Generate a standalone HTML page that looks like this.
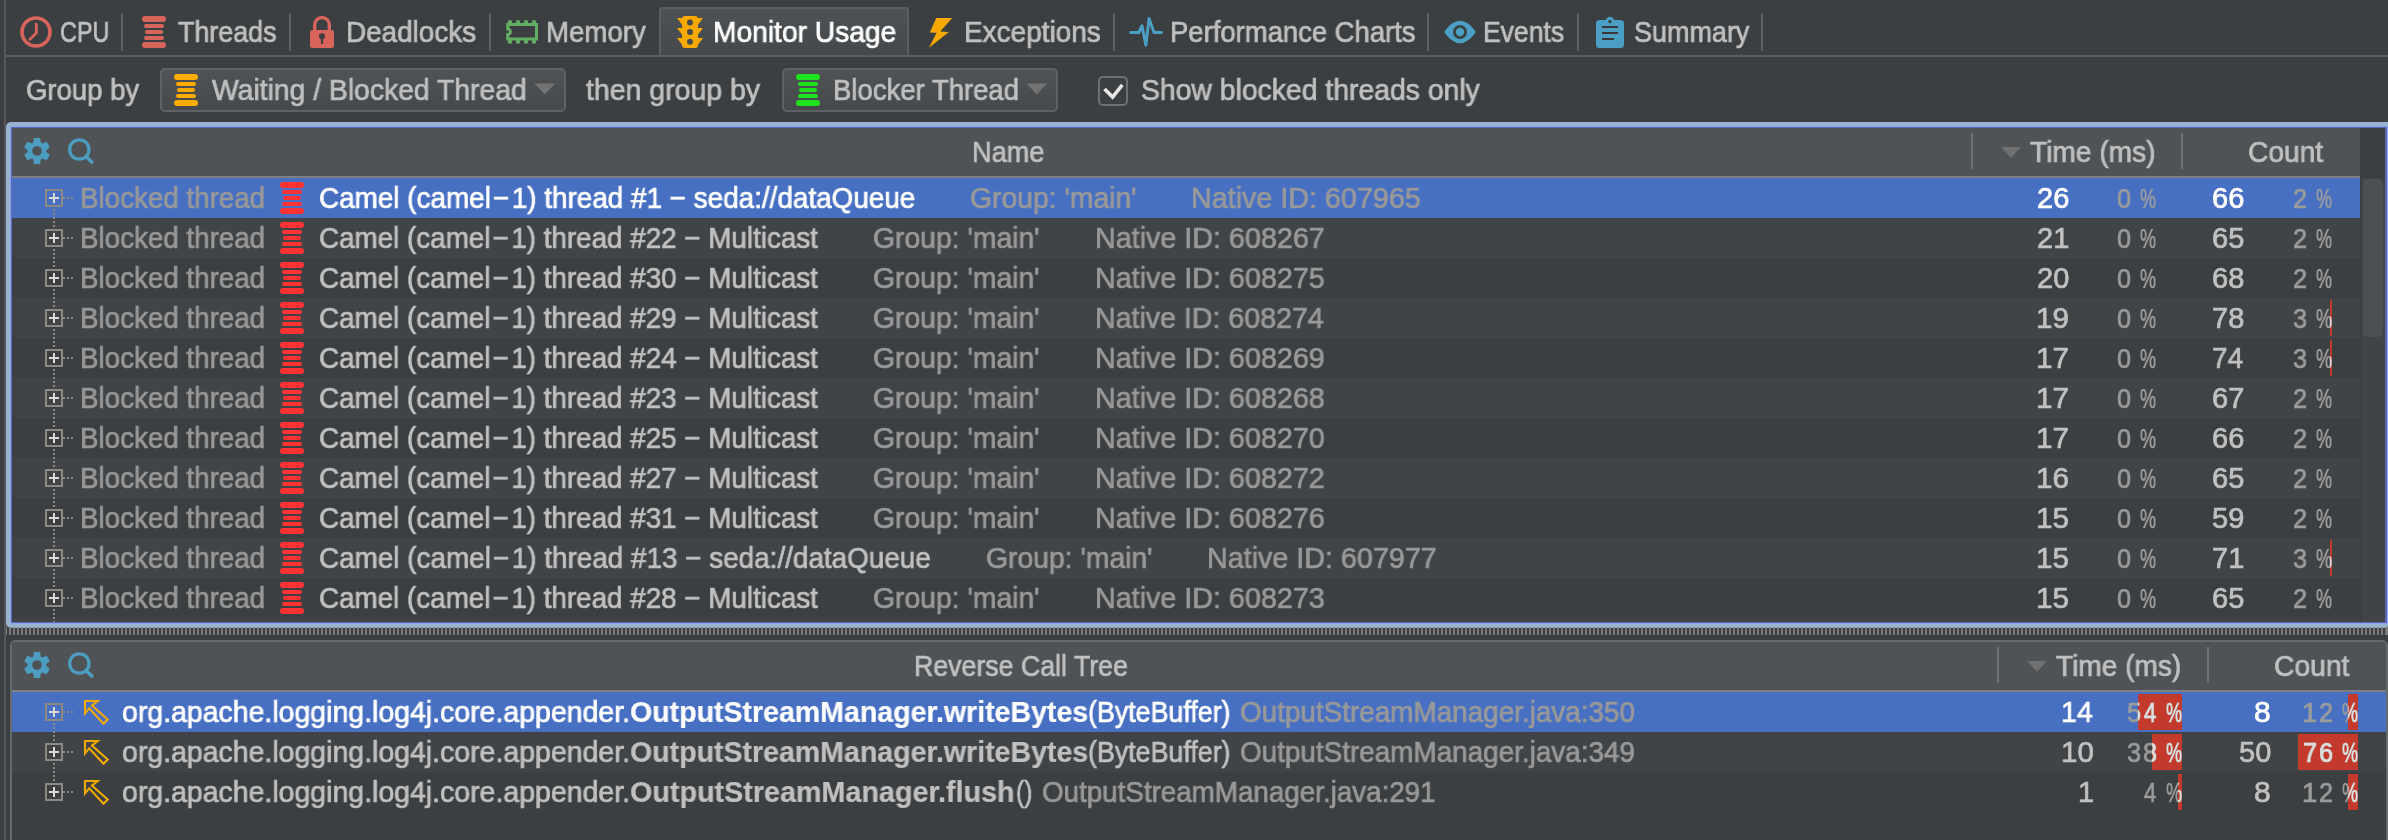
<!DOCTYPE html>
<html><head><meta charset="utf-8">
<style>
html,body{margin:0;padding:0}
body{width:2388px;height:840px;overflow:hidden;position:relative;background:#3c3f41;font-family:"Liberation Sans",sans-serif}
.t{position:absolute;white-space:pre;line-height:40px;font-family:"Liberation Sans",sans-serif;transform-origin:0 0;will-change:transform}
.r{position:absolute}
</style></head><body>
<div class="r" style="left:4px;top:0px;width:2px;height:840px;background:#555759;"></div>
<div class="r" style="left:659px;top:7px;width:246px;height:48px;border:2px solid #5b5e60;border-bottom:none;border-radius:3px 3px 0 0;background:linear-gradient(#4e5255,#44484b)"></div>
<div class="r" style="left:6px;top:55px;width:2382px;height:2px;background:#5b5d5f;"></div>
<div class="r" style="left:121px;top:13px;width:2px;height:38px;background:#5f6163;"></div>
<div class="r" style="left:289px;top:13px;width:2px;height:38px;background:#5f6163;"></div>
<div class="r" style="left:489px;top:13px;width:2px;height:38px;background:#5f6163;"></div>
<div class="r" style="left:1113px;top:13px;width:2px;height:38px;background:#5f6163;"></div>
<div class="r" style="left:1427px;top:13px;width:2px;height:38px;background:#5f6163;"></div>
<div class="r" style="left:1577px;top:13px;width:2px;height:38px;background:#5f6163;"></div>
<div class="r" style="left:1761px;top:13px;width:2px;height:38px;background:#5f6163;"></div>
<svg class="r" style="left:20px;top:16px" width="32" height="32" viewBox="0 0 32 32"><circle cx="16" cy="16" r="14" fill="none" stroke="#d8645c" stroke-width="3.6"/><path d="M16.3 8.2 V17 L10 23.2" fill="none" stroke="#d8645c" stroke-width="2.8" stroke-linecap="round" stroke-linejoin="round"/></svg>
<svg class="r" style="left:142px;top:16px" width="24" height="32" viewBox="0 0 24 32"><rect x="0" y="0" width="24" height="6" rx="3" fill="#d8645c"/><rect x="2" y="8" width="20" height="4" rx="2" fill="#d8645c"/><rect x="3" y="14" width="18" height="4" rx="2" fill="#d8645c"/><rect x="2" y="20" width="20" height="4" rx="2" fill="#d8645c"/><rect x="0" y="26" width="24" height="6" rx="3" fill="#d8645c"/></svg>
<svg class="r" style="left:310px;top:15px" width="24" height="34" viewBox="0 0 24 34"><path d="M4.7 15.5 V9.8 A7.3 7.3 0 0 1 19.3 9.8 V15.5" fill="none" stroke="#d8645c" stroke-width="3.4"/><rect x="0" y="15" width="24" height="18" rx="2.5" fill="#d8645c"/><circle cx="12" cy="21.3" r="3" fill="#3c3f41"/><rect x="10.9" y="21" width="2.2" height="8" fill="#3c3f41"/></svg>
<svg class="r" style="left:504px;top:18px" width="36" height="28" viewBox="0 0 36 28"><path d="M3.7 6.6 H32.5 V20.9 H3.7 V16.5 A2.7 2.7 0 0 0 3.7 11 Z" fill="none" stroke="#62ae62" stroke-width="3"/><rect x="4" y="2" width="4" height="4" rx="1.6" fill="#62ae62"/><rect x="4" y="21.5" width="4" height="4.3" rx="1.6" fill="#62ae62"/><rect x="12" y="2" width="4" height="4" rx="1.6" fill="#62ae62"/><rect x="12" y="21.5" width="4" height="4.3" rx="1.6" fill="#62ae62"/><rect x="20" y="2" width="4" height="4" rx="1.6" fill="#62ae62"/><rect x="20" y="21.5" width="4" height="4.3" rx="1.6" fill="#62ae62"/><rect x="28" y="2" width="4" height="4" rx="1.6" fill="#62ae62"/><rect x="28" y="21.5" width="4" height="4.3" rx="1.6" fill="#62ae62"/></svg>
<svg class="r" style="left:676px;top:15px" width="30" height="34" viewBox="0 0 30 34"><rect x="6" y="1" width="16" height="32" rx="3" fill="#f8a900"/><path d="M1 3 H7 V11 Z M27 3 H21 V11 Z M1 13 H7 V21 Z M27 13 H21 V21 Z M1 23 H7 V31 Z M27 23 H21 V31 Z" fill="#f8a900"/><circle cx="14" cy="7.5" r="3" fill="#474b4e"/><circle cx="14" cy="17" r="3" fill="#474b4e"/><circle cx="14" cy="26.7" r="3" fill="#474b4e"/></svg>
<svg class="r" style="left:924px;top:10px" width="36" height="44" viewBox="924 10 36 44"><path d="M936.3 17.9 L952.3 17.9 L940.2 31.5 L948.9 32 L929 47.7 L936.6 32.8 L929.8 32.5 Z" fill="#f8a900"/></svg>
<svg class="r" style="left:1126px;top:10px" width="44" height="44" viewBox="1126 10 44 44"><path d="M1130.7 32.5 H1138.8 L1142 25.7 L1145.9 45.2 L1149 18.6 L1154 32.5 H1161.4" fill="none" stroke="#4c9fc4" stroke-width="3" stroke-linejoin="round" stroke-linecap="round"/></svg>
<svg class="r" style="left:1438px;top:10px" width="44" height="44" viewBox="1438 10 44 44"><path d="M1444 32 Q1460 9.5 1476 32 Q1460 54.5 1444 32 Z" fill="#4c9fc4"/><circle cx="1460" cy="32" r="5.6" fill="none" stroke="#3c3f41" stroke-width="2.8"/></svg>
<svg class="r" style="left:1590px;top:10px" width="40" height="44" viewBox="1590 10 40 44"><rect x="1596" y="20" width="28" height="28" rx="3.5" fill="#4c9fc4"/><circle cx="1610" cy="21" r="4.3" fill="#4c9fc4"/><circle cx="1610" cy="21.5" r="1.6" fill="#3a3536"/><rect x="1602" y="26" width="16" height="2" fill="#3a3536"/><rect x="1602" y="32" width="16" height="2" fill="#3a3536"/><rect x="1602" y="38" width="12" height="2" fill="#3a3536"/></svg>
<div class="r" style="left:160px;top:68px;width:402px;height:40px;border:2px solid #5f6264;border-radius:5px;background:linear-gradient(#4f5356,#45494c)"></div>
<svg class="r" style="left:174px;top:74px" width="24" height="32" viewBox="0 0 24 32"><rect x="0" y="0" width="24" height="6" rx="3" fill="#ffab00"/><rect x="2" y="8" width="20" height="4" rx="2" fill="#ffab00"/><rect x="3" y="14" width="18" height="4" rx="2" fill="#ffab00"/><rect x="2" y="20" width="20" height="4" rx="2" fill="#ffab00"/><rect x="0" y="26" width="24" height="6" rx="3" fill="#ffab00"/></svg>
<svg class="r" style="left:534px;top:83px" width="22" height="12" viewBox="0 0 22 12"><path d="M0.5 0.5 H21 L10.75 11.5 Z" fill="#737373"/></svg>
<div class="r" style="left:782px;top:68px;width:272px;height:40px;border:2px solid #5f6264;border-radius:5px;background:linear-gradient(#4f5356,#45494c)"></div>
<svg class="r" style="left:796px;top:74px" width="24" height="32" viewBox="0 0 24 32"><rect x="0" y="0" width="24" height="6" rx="3" fill="#1ee21e"/><rect x="2" y="8" width="20" height="4" rx="2" fill="#1ee21e"/><rect x="3" y="14" width="18" height="4" rx="2" fill="#1ee21e"/><rect x="2" y="20" width="20" height="4" rx="2" fill="#1ee21e"/><rect x="0" y="26" width="24" height="6" rx="3" fill="#1ee21e"/></svg>
<svg class="r" style="left:1026px;top:83px" width="22" height="12" viewBox="0 0 22 12"><path d="M0.5 0.5 H21 L10.75 11.5 Z" fill="#737373"/></svg>
<div class="r" style="left:1098px;top:76px;width:26px;height:26px;border:2px solid #6e7072;border-radius:5px;background:#3c3f41"></div>
<svg class="r" style="left:1098px;top:76px" width="30" height="30" viewBox="1098 76 30 30"><path d="M1104.5 89 L1112.6 97 L1122.3 84.8" fill="none" stroke="#e6e6e6" stroke-width="3.6"/></svg>
<div class="r" style="left:6px;top:122px;width:2382px;height:506px;background:#9ab3cf;border-radius:5px 0 0 5px"></div>
<div class="r" style="left:10px;top:126px;width:2378px;height:498px;background:#8aa6ee;border-radius:2px 0 0 2px"></div>
<div class="r" style="left:11px;top:127px;width:2376px;height:496px;background:#5d69b6;border-radius:1px 0 0 1px"></div>
<div class="r" style="left:12px;top:128px;width:2373px;height:494px;background:#3c3f41;"></div>
<div class="r" style="left:12px;top:128px;width:2348px;height:48px;background:#4f5356;"></div>
<div class="r" style="left:12px;top:176px;width:2348px;height:2px;background:#7e7f80;"></div>
<div class="r" style="left:2360px;top:128px;width:25px;height:50px;background:#3c3f41;"></div>
<div class="r" style="left:2360px;top:178px;width:25px;height:444px;background:#414447;"></div>
<div class="r" style="left:2360px;top:178px;width:1px;height:444px;background:#3b3e40;"></div>
<div class="r" style="left:2363px;top:179px;width:20px;height:158px;background:#4d5052;border-radius:5px"></div>
<svg class="r" style="left:23px;top:137px" width="28" height="28" viewBox="-14 -14 28 28"><g fill="#4c9dbf"><circle r="9.3"/><path d="M-3.9 -8 L-3.1 -13 L3.1 -13 L3.9 -8 Z" transform="rotate(0)"/><path d="M-3.9 -8 L-3.1 -13 L3.1 -13 L3.9 -8 Z" transform="rotate(60)"/><path d="M-3.9 -8 L-3.1 -13 L3.1 -13 L3.9 -8 Z" transform="rotate(120)"/><path d="M-3.9 -8 L-3.1 -13 L3.1 -13 L3.9 -8 Z" transform="rotate(180)"/><path d="M-3.9 -8 L-3.1 -13 L3.1 -13 L3.9 -8 Z" transform="rotate(240)"/><path d="M-3.9 -8 L-3.1 -13 L3.1 -13 L3.9 -8 Z" transform="rotate(300)"/></g><circle r="4.8" fill="#4f5356"/></svg>
<svg class="r" style="left:68px;top:138px" width="28" height="28" viewBox="0 0 28 28"><circle cx="11.3" cy="11.5" r="9.7" fill="none" stroke="#4c9dbf" stroke-width="3.3"/><line x1="18.5" y1="19" x2="23.9" y2="24.1" stroke="#4c9dbf" stroke-width="3.6" stroke-linecap="round"/></svg>
<div class="r" style="left:1971px;top:133px;width:2px;height:36px;background:#6f7173;"></div>
<div class="r" style="left:2181px;top:133px;width:2px;height:36px;background:#6f7173;"></div>
<svg class="r" style="left:2001px;top:147px" width="20" height="11" viewBox="0 0 20 11"><path d="M0 0 H20 L10 11 Z" fill="#707070"/></svg>
<div class="r" style="left:12px;top:178px;width:2348px;height:40px;background:#4870c2;"></div>
<div class="r" style="left:12px;top:218px;width:2348px;height:40px;background:#414447;"></div>
<div class="r" style="left:12px;top:258px;width:2348px;height:40px;background:#3c3f41;"></div>
<div class="r" style="left:12px;top:298px;width:2348px;height:40px;background:#414447;"></div>
<div class="r" style="left:12px;top:338px;width:2348px;height:40px;background:#3c3f41;"></div>
<div class="r" style="left:12px;top:378px;width:2348px;height:40px;background:#414447;"></div>
<div class="r" style="left:12px;top:418px;width:2348px;height:40px;background:#3c3f41;"></div>
<div class="r" style="left:12px;top:458px;width:2348px;height:40px;background:#414447;"></div>
<div class="r" style="left:12px;top:498px;width:2348px;height:40px;background:#3c3f41;"></div>
<div class="r" style="left:12px;top:538px;width:2348px;height:40px;background:#414447;"></div>
<div class="r" style="left:12px;top:578px;width:2348px;height:40px;background:#3c3f41;"></div>
<div class="r" style="left:12px;top:618px;width:2348px;height:4px;background:#414447;"></div>
<div class="r" style="left:53px;top:209px;width:2px;height:413px;background:repeating-linear-gradient(to bottom,#8c8882 0 2px,transparent 2px 4px)"></div>
<svg class="r" style="left:45px;top:189px" width="30" height="18" viewBox="0 0 30 18"><rect x="1" y="1" width="16" height="16" fill="none" stroke="#8c8882" stroke-width="2"/><rect x="4" y="8" width="10" height="2" fill="#dcdad6"/><rect x="8" y="4" width="2" height="10" fill="#dcdad6"/><rect x="18" y="8" width="2" height="2" fill="#8c8882"/><rect x="22" y="8" width="2" height="2" fill="#8c8882"/><rect x="26" y="8" width="2" height="2" fill="#8c8882"/></svg>
<svg class="r" style="left:280px;top:182px" width="24" height="32" viewBox="0 0 24 32"><rect x="0" y="0" width="24" height="6" rx="3" fill="#ff3333"/><rect x="2" y="8" width="20" height="4" rx="2" fill="#ff3333"/><rect x="3" y="14" width="18" height="4" rx="2" fill="#ff3333"/><rect x="2" y="20" width="20" height="4" rx="2" fill="#ff3333"/><rect x="0" y="26" width="24" height="6" rx="3" fill="#ff3333"/></svg>
<svg class="r" style="left:45px;top:229px" width="30" height="18" viewBox="0 0 30 18"><rect x="1" y="1" width="16" height="16" fill="none" stroke="#8c8882" stroke-width="2"/><rect x="4" y="8" width="10" height="2" fill="#dcdad6"/><rect x="8" y="4" width="2" height="10" fill="#dcdad6"/><rect x="18" y="8" width="2" height="2" fill="#8c8882"/><rect x="22" y="8" width="2" height="2" fill="#8c8882"/><rect x="26" y="8" width="2" height="2" fill="#8c8882"/></svg>
<svg class="r" style="left:280px;top:222px" width="24" height="32" viewBox="0 0 24 32"><rect x="0" y="0" width="24" height="6" rx="3" fill="#ff3333"/><rect x="2" y="8" width="20" height="4" rx="2" fill="#ff3333"/><rect x="3" y="14" width="18" height="4" rx="2" fill="#ff3333"/><rect x="2" y="20" width="20" height="4" rx="2" fill="#ff3333"/><rect x="0" y="26" width="24" height="6" rx="3" fill="#ff3333"/></svg>
<svg class="r" style="left:45px;top:269px" width="30" height="18" viewBox="0 0 30 18"><rect x="1" y="1" width="16" height="16" fill="none" stroke="#8c8882" stroke-width="2"/><rect x="4" y="8" width="10" height="2" fill="#dcdad6"/><rect x="8" y="4" width="2" height="10" fill="#dcdad6"/><rect x="18" y="8" width="2" height="2" fill="#8c8882"/><rect x="22" y="8" width="2" height="2" fill="#8c8882"/><rect x="26" y="8" width="2" height="2" fill="#8c8882"/></svg>
<svg class="r" style="left:280px;top:262px" width="24" height="32" viewBox="0 0 24 32"><rect x="0" y="0" width="24" height="6" rx="3" fill="#ff3333"/><rect x="2" y="8" width="20" height="4" rx="2" fill="#ff3333"/><rect x="3" y="14" width="18" height="4" rx="2" fill="#ff3333"/><rect x="2" y="20" width="20" height="4" rx="2" fill="#ff3333"/><rect x="0" y="26" width="24" height="6" rx="3" fill="#ff3333"/></svg>
<svg class="r" style="left:45px;top:309px" width="30" height="18" viewBox="0 0 30 18"><rect x="1" y="1" width="16" height="16" fill="none" stroke="#8c8882" stroke-width="2"/><rect x="4" y="8" width="10" height="2" fill="#dcdad6"/><rect x="8" y="4" width="2" height="10" fill="#dcdad6"/><rect x="18" y="8" width="2" height="2" fill="#8c8882"/><rect x="22" y="8" width="2" height="2" fill="#8c8882"/><rect x="26" y="8" width="2" height="2" fill="#8c8882"/></svg>
<svg class="r" style="left:280px;top:302px" width="24" height="32" viewBox="0 0 24 32"><rect x="0" y="0" width="24" height="6" rx="3" fill="#ff3333"/><rect x="2" y="8" width="20" height="4" rx="2" fill="#ff3333"/><rect x="3" y="14" width="18" height="4" rx="2" fill="#ff3333"/><rect x="2" y="20" width="20" height="4" rx="2" fill="#ff3333"/><rect x="0" y="26" width="24" height="6" rx="3" fill="#ff3333"/></svg>
<div class="r" style="left:2330.2px;top:300px;width:2px;height:36px;background:#c3392b;"></div>
<svg class="r" style="left:45px;top:349px" width="30" height="18" viewBox="0 0 30 18"><rect x="1" y="1" width="16" height="16" fill="none" stroke="#8c8882" stroke-width="2"/><rect x="4" y="8" width="10" height="2" fill="#dcdad6"/><rect x="8" y="4" width="2" height="10" fill="#dcdad6"/><rect x="18" y="8" width="2" height="2" fill="#8c8882"/><rect x="22" y="8" width="2" height="2" fill="#8c8882"/><rect x="26" y="8" width="2" height="2" fill="#8c8882"/></svg>
<svg class="r" style="left:280px;top:342px" width="24" height="32" viewBox="0 0 24 32"><rect x="0" y="0" width="24" height="6" rx="3" fill="#ff3333"/><rect x="2" y="8" width="20" height="4" rx="2" fill="#ff3333"/><rect x="3" y="14" width="18" height="4" rx="2" fill="#ff3333"/><rect x="2" y="20" width="20" height="4" rx="2" fill="#ff3333"/><rect x="0" y="26" width="24" height="6" rx="3" fill="#ff3333"/></svg>
<div class="r" style="left:2330.2px;top:340px;width:2px;height:36px;background:#c3392b;"></div>
<svg class="r" style="left:45px;top:389px" width="30" height="18" viewBox="0 0 30 18"><rect x="1" y="1" width="16" height="16" fill="none" stroke="#8c8882" stroke-width="2"/><rect x="4" y="8" width="10" height="2" fill="#dcdad6"/><rect x="8" y="4" width="2" height="10" fill="#dcdad6"/><rect x="18" y="8" width="2" height="2" fill="#8c8882"/><rect x="22" y="8" width="2" height="2" fill="#8c8882"/><rect x="26" y="8" width="2" height="2" fill="#8c8882"/></svg>
<svg class="r" style="left:280px;top:382px" width="24" height="32" viewBox="0 0 24 32"><rect x="0" y="0" width="24" height="6" rx="3" fill="#ff3333"/><rect x="2" y="8" width="20" height="4" rx="2" fill="#ff3333"/><rect x="3" y="14" width="18" height="4" rx="2" fill="#ff3333"/><rect x="2" y="20" width="20" height="4" rx="2" fill="#ff3333"/><rect x="0" y="26" width="24" height="6" rx="3" fill="#ff3333"/></svg>
<svg class="r" style="left:45px;top:429px" width="30" height="18" viewBox="0 0 30 18"><rect x="1" y="1" width="16" height="16" fill="none" stroke="#8c8882" stroke-width="2"/><rect x="4" y="8" width="10" height="2" fill="#dcdad6"/><rect x="8" y="4" width="2" height="10" fill="#dcdad6"/><rect x="18" y="8" width="2" height="2" fill="#8c8882"/><rect x="22" y="8" width="2" height="2" fill="#8c8882"/><rect x="26" y="8" width="2" height="2" fill="#8c8882"/></svg>
<svg class="r" style="left:280px;top:422px" width="24" height="32" viewBox="0 0 24 32"><rect x="0" y="0" width="24" height="6" rx="3" fill="#ff3333"/><rect x="2" y="8" width="20" height="4" rx="2" fill="#ff3333"/><rect x="3" y="14" width="18" height="4" rx="2" fill="#ff3333"/><rect x="2" y="20" width="20" height="4" rx="2" fill="#ff3333"/><rect x="0" y="26" width="24" height="6" rx="3" fill="#ff3333"/></svg>
<svg class="r" style="left:45px;top:469px" width="30" height="18" viewBox="0 0 30 18"><rect x="1" y="1" width="16" height="16" fill="none" stroke="#8c8882" stroke-width="2"/><rect x="4" y="8" width="10" height="2" fill="#dcdad6"/><rect x="8" y="4" width="2" height="10" fill="#dcdad6"/><rect x="18" y="8" width="2" height="2" fill="#8c8882"/><rect x="22" y="8" width="2" height="2" fill="#8c8882"/><rect x="26" y="8" width="2" height="2" fill="#8c8882"/></svg>
<svg class="r" style="left:280px;top:462px" width="24" height="32" viewBox="0 0 24 32"><rect x="0" y="0" width="24" height="6" rx="3" fill="#ff3333"/><rect x="2" y="8" width="20" height="4" rx="2" fill="#ff3333"/><rect x="3" y="14" width="18" height="4" rx="2" fill="#ff3333"/><rect x="2" y="20" width="20" height="4" rx="2" fill="#ff3333"/><rect x="0" y="26" width="24" height="6" rx="3" fill="#ff3333"/></svg>
<svg class="r" style="left:45px;top:509px" width="30" height="18" viewBox="0 0 30 18"><rect x="1" y="1" width="16" height="16" fill="none" stroke="#8c8882" stroke-width="2"/><rect x="4" y="8" width="10" height="2" fill="#dcdad6"/><rect x="8" y="4" width="2" height="10" fill="#dcdad6"/><rect x="18" y="8" width="2" height="2" fill="#8c8882"/><rect x="22" y="8" width="2" height="2" fill="#8c8882"/><rect x="26" y="8" width="2" height="2" fill="#8c8882"/></svg>
<svg class="r" style="left:280px;top:502px" width="24" height="32" viewBox="0 0 24 32"><rect x="0" y="0" width="24" height="6" rx="3" fill="#ff3333"/><rect x="2" y="8" width="20" height="4" rx="2" fill="#ff3333"/><rect x="3" y="14" width="18" height="4" rx="2" fill="#ff3333"/><rect x="2" y="20" width="20" height="4" rx="2" fill="#ff3333"/><rect x="0" y="26" width="24" height="6" rx="3" fill="#ff3333"/></svg>
<svg class="r" style="left:45px;top:549px" width="30" height="18" viewBox="0 0 30 18"><rect x="1" y="1" width="16" height="16" fill="none" stroke="#8c8882" stroke-width="2"/><rect x="4" y="8" width="10" height="2" fill="#dcdad6"/><rect x="8" y="4" width="2" height="10" fill="#dcdad6"/><rect x="18" y="8" width="2" height="2" fill="#8c8882"/><rect x="22" y="8" width="2" height="2" fill="#8c8882"/><rect x="26" y="8" width="2" height="2" fill="#8c8882"/></svg>
<svg class="r" style="left:280px;top:542px" width="24" height="32" viewBox="0 0 24 32"><rect x="0" y="0" width="24" height="6" rx="3" fill="#ff3333"/><rect x="2" y="8" width="20" height="4" rx="2" fill="#ff3333"/><rect x="3" y="14" width="18" height="4" rx="2" fill="#ff3333"/><rect x="2" y="20" width="20" height="4" rx="2" fill="#ff3333"/><rect x="0" y="26" width="24" height="6" rx="3" fill="#ff3333"/></svg>
<div class="r" style="left:2330.2px;top:540px;width:2px;height:36px;background:#c3392b;"></div>
<svg class="r" style="left:45px;top:589px" width="30" height="18" viewBox="0 0 30 18"><rect x="1" y="1" width="16" height="16" fill="none" stroke="#8c8882" stroke-width="2"/><rect x="4" y="8" width="10" height="2" fill="#dcdad6"/><rect x="8" y="4" width="2" height="10" fill="#dcdad6"/><rect x="18" y="8" width="2" height="2" fill="#8c8882"/><rect x="22" y="8" width="2" height="2" fill="#8c8882"/><rect x="26" y="8" width="2" height="2" fill="#8c8882"/></svg>
<svg class="r" style="left:280px;top:582px" width="24" height="32" viewBox="0 0 24 32"><rect x="0" y="0" width="24" height="6" rx="3" fill="#ff3333"/><rect x="2" y="8" width="20" height="4" rx="2" fill="#ff3333"/><rect x="3" y="14" width="18" height="4" rx="2" fill="#ff3333"/><rect x="2" y="20" width="20" height="4" rx="2" fill="#ff3333"/><rect x="0" y="26" width="24" height="6" rx="3" fill="#ff3333"/></svg>
<div class="r" style="left:6px;top:627px;width:2382px;height:8px;background:repeating-linear-gradient(to right,#7a7a7a 0 2px,transparent 2px 4px);background-position:-1px 0"></div>
<div class="r" style="left:10px;top:640px;width:2374px;height:210px;border:2px solid #67696b;border-radius:6px;background:#3c3f41"></div>
<div class="r" style="left:12px;top:642px;width:2374px;height:48px;background:#4f5356;border-radius:4px 4px 0 0"></div>
<div class="r" style="left:12px;top:690px;width:2374px;height:2px;background:#7e7f80;"></div>
<svg class="r" style="left:23px;top:651px" width="28" height="28" viewBox="-14 -14 28 28"><g fill="#4c9dbf"><circle r="9.3"/><path d="M-3.9 -8 L-3.1 -13 L3.1 -13 L3.9 -8 Z" transform="rotate(0)"/><path d="M-3.9 -8 L-3.1 -13 L3.1 -13 L3.9 -8 Z" transform="rotate(60)"/><path d="M-3.9 -8 L-3.1 -13 L3.1 -13 L3.9 -8 Z" transform="rotate(120)"/><path d="M-3.9 -8 L-3.1 -13 L3.1 -13 L3.9 -8 Z" transform="rotate(180)"/><path d="M-3.9 -8 L-3.1 -13 L3.1 -13 L3.9 -8 Z" transform="rotate(240)"/><path d="M-3.9 -8 L-3.1 -13 L3.1 -13 L3.9 -8 Z" transform="rotate(300)"/></g><circle r="4.8" fill="#4f5356"/></svg>
<svg class="r" style="left:68px;top:652px" width="28" height="28" viewBox="0 0 28 28"><circle cx="11.3" cy="11.5" r="9.7" fill="none" stroke="#4c9dbf" stroke-width="3.3"/><line x1="18.5" y1="19" x2="23.9" y2="24.1" stroke="#4c9dbf" stroke-width="3.6" stroke-linecap="round"/></svg>
<div class="r" style="left:1997px;top:647px;width:2px;height:36px;background:#6f7173;"></div>
<div class="r" style="left:2207px;top:647px;width:2px;height:36px;background:#6f7173;"></div>
<svg class="r" style="left:2027px;top:661px" width="20" height="11" viewBox="0 0 20 11"><path d="M0 0 H20 L10 11 Z" fill="#707070"/></svg>
<div class="r" style="left:12px;top:692px;width:2374px;height:40px;background:#4870c2;"></div>
<div class="r" style="left:12px;top:732px;width:2374px;height:40px;background:#414447;"></div>
<div class="r" style="left:12px;top:772px;width:2374px;height:40px;background:#3c3f41;"></div>
<div class="r" style="left:12px;top:812px;width:2374px;height:28px;background:#3c3f41;"></div>
<div class="r" style="left:53px;top:723px;width:2px;height:60px;background:repeating-linear-gradient(to bottom,#8c8882 0 2px,transparent 2px 4px)"></div>
<svg class="r" style="left:45px;top:703px" width="30" height="18" viewBox="0 0 30 18"><rect x="1" y="1" width="16" height="16" fill="none" stroke="#8c8882" stroke-width="2"/><rect x="4" y="8" width="10" height="2" fill="#dcdad6"/><rect x="8" y="4" width="2" height="10" fill="#dcdad6"/><rect x="18" y="8" width="2" height="2" fill="#8c8882"/><rect x="22" y="8" width="2" height="2" fill="#8c8882"/><rect x="26" y="8" width="2" height="2" fill="#8c8882"/></svg>
<svg class="r" style="left:82px;top:699px" width="28" height="28" viewBox="0 0 28 28"><path d="M3 2 L15.6 2 L9.9 6.6 L25.7 20.5 L21.5 24.8 L7.2 9.3 L3 14.4 Z" fill="none" stroke="#f2a900" stroke-width="2.1"/></svg>
<div class="r" style="left:2138px;top:694px;width:44px;height:36px;background:#c3392b;"></div>
<div class="r" style="left:2348px;top:694px;width:10px;height:36px;background:#c3392b;"></div>
<svg class="r" style="left:45px;top:743px" width="30" height="18" viewBox="0 0 30 18"><rect x="1" y="1" width="16" height="16" fill="none" stroke="#8c8882" stroke-width="2"/><rect x="4" y="8" width="10" height="2" fill="#dcdad6"/><rect x="8" y="4" width="2" height="10" fill="#dcdad6"/><rect x="18" y="8" width="2" height="2" fill="#8c8882"/><rect x="22" y="8" width="2" height="2" fill="#8c8882"/><rect x="26" y="8" width="2" height="2" fill="#8c8882"/></svg>
<svg class="r" style="left:82px;top:739px" width="28" height="28" viewBox="0 0 28 28"><path d="M3 2 L15.6 2 L9.9 6.6 L25.7 20.5 L21.5 24.8 L7.2 9.3 L3 14.4 Z" fill="none" stroke="#f2a900" stroke-width="2.1"/></svg>
<div class="r" style="left:2152px;top:734px;width:30px;height:36px;background:#c3392b;"></div>
<div class="r" style="left:2298px;top:734px;width:60px;height:36px;background:#c3392b;"></div>
<svg class="r" style="left:45px;top:783px" width="30" height="18" viewBox="0 0 30 18"><rect x="1" y="1" width="16" height="16" fill="none" stroke="#8c8882" stroke-width="2"/><rect x="4" y="8" width="10" height="2" fill="#dcdad6"/><rect x="8" y="4" width="2" height="10" fill="#dcdad6"/><rect x="18" y="8" width="2" height="2" fill="#8c8882"/><rect x="22" y="8" width="2" height="2" fill="#8c8882"/><rect x="26" y="8" width="2" height="2" fill="#8c8882"/></svg>
<svg class="r" style="left:82px;top:779px" width="28" height="28" viewBox="0 0 28 28"><path d="M3 2 L15.6 2 L9.9 6.6 L25.7 20.5 L21.5 24.8 L7.2 9.3 L3 14.4 Z" fill="none" stroke="#f2a900" stroke-width="2.1"/></svg>
<div class="r" style="left:2178px;top:774px;width:4px;height:36px;background:#c3392b;"></div>
<div class="r" style="left:2348px;top:774px;width:10px;height:36px;background:#c3392b;"></div>
<div class="t" style="left:60.19px;top:12px;color:#c0c0c0;font-size:29px;transform:scaleX(0.8064);-webkit-text-stroke:0.7px #c0c0c0">CPU</div>
<div class="t" style="left:178.00px;top:12px;color:#c0c0c0;font-size:29px;transform:scaleX(0.9255);-webkit-text-stroke:0.7px #c0c0c0">Threads</div>
<div class="t" style="left:345.68px;top:12px;color:#c0c0c0;font-size:29px;transform:scaleX(0.9601);-webkit-text-stroke:0.7px #c0c0c0">Deadlocks</div>
<div class="t" style="left:545.50px;top:12px;color:#c0c0c0;font-size:29px;transform:scaleX(0.9523);-webkit-text-stroke:0.7px #c0c0c0">Memory</div>
<div class="t" style="left:713.06px;top:12px;color:#ffffff;font-size:29px;transform:scaleX(0.9717);-webkit-text-stroke:0.7px #ffffff">Monitor Usage</div>
<div class="t" style="left:963.67px;top:12px;color:#c0c0c0;font-size:29px;transform:scaleX(0.9644);-webkit-text-stroke:0.7px #c0c0c0">Exceptions</div>
<div class="t" style="left:1169.51px;top:12px;color:#c0c0c0;font-size:29px;transform:scaleX(0.9460);-webkit-text-stroke:0.7px #c0c0c0">Performance Charts</div>
<div class="t" style="left:1483.37px;top:12px;color:#c0c0c0;font-size:29px;transform:scaleX(0.9146);-webkit-text-stroke:0.7px #c0c0c0">Events</div>
<div class="t" style="left:1633.57px;top:12px;color:#c0c0c0;font-size:29px;transform:scaleX(0.9298);-webkit-text-stroke:0.7px #c0c0c0">Summary</div>
<div class="t" style="left:25.80px;top:70px;color:#c0c0c0;font-size:29px;transform:scaleX(0.9484);-webkit-text-stroke:0.7px #c0c0c0">Group by</div>
<div class="t" style="left:212.30px;top:70px;color:#c0c0c0;font-size:29px;transform:scaleX(0.9761);-webkit-text-stroke:0.7px #c0c0c0">Waiting / Blocked Thread</div>
<div class="t" style="left:586.40px;top:70px;color:#c0c0c0;font-size:29px;transform:scaleX(0.9817);-webkit-text-stroke:0.7px #c0c0c0">then group by</div>
<div class="t" style="left:833.10px;top:70px;color:#c0c0c0;font-size:29px;transform:scaleX(0.9483);-webkit-text-stroke:0.7px #c0c0c0">Blocker Thread</div>
<div class="t" style="left:1140.72px;top:70px;color:#c0c0c0;font-size:29px;transform:scaleX(0.9775);-webkit-text-stroke:0.7px #c0c0c0">Show blocked threads only</div>
<div class="t" style="left:971.73px;top:132px;color:#c0c0c0;font-size:29px;transform:scaleX(0.9363);-webkit-text-stroke:0.7px #c0c0c0">Name</div>
<div class="t" style="left:2030.00px;top:132px;color:#c0c0c0;font-size:29px;transform:scaleX(0.9700);-webkit-text-stroke:0.7px #c0c0c0">Time (ms)</div>
<div class="t" style="left:2247.63px;top:132px;color:#c0c0c0;font-size:29px;transform:scaleX(0.9708);-webkit-text-stroke:0.7px #c0c0c0">Count</div>
<div class="t" style="left:80.09px;top:178px;color:#989898;font-size:29px;transform:scaleX(0.9568);-webkit-text-stroke:0.7px #989898">Blocked thread</div>
<div class="t" style="left:318.54px;top:178px;color:#ffffff;font-size:29px;transform:scaleX(0.9607);-webkit-text-stroke:0.7px #ffffff">Camel (camel − 1) thread #1 − seda://dataQueue</div>
<div class="t" style="left:969.52px;top:178px;color:#999999;font-size:29px;transform:scaleX(0.9763);-webkit-text-stroke:0.7px #999999">Group: 'main'</div>
<div class="t" style="left:1191.02px;top:178px;color:#999999;font-size:29px;transform:scaleX(0.9895);-webkit-text-stroke:0.7px #999999">Native ID: 607965</div>
<div class="t" style="left:2036.61px;top:178px;color:#ffffff;font-size:29px;transform:scaleX(0.9891);-webkit-text-stroke:0.7px #ffffff">26</div>
<div class="t" style="left:2117.16px;top:179px;color:#9c9c9c;font-size:27px;transform:scaleX(0.9385);-webkit-text-stroke:0.7px #9c9c9c">0</div>
<div class="t" style="left:2140.30px;top:179px;color:#9c9c9c;font-size:27px;transform:scaleX(0.6667);-webkit-text-stroke:0.7px #9c9c9c">%</div>
<div class="t" style="left:2212.30px;top:178px;color:#ffffff;font-size:29px;transform:scaleX(0.9957);-webkit-text-stroke:0.7px #ffffff">66</div>
<div class="t" style="left:2293.06px;top:179px;color:#9c9c9c;font-size:27px;transform:scaleX(0.9385);-webkit-text-stroke:0.7px #9c9c9c">2</div>
<div class="t" style="left:2316.20px;top:179px;color:#9c9c9c;font-size:27px;transform:scaleX(0.6667);-webkit-text-stroke:0.7px #9c9c9c">%</div>
<div class="t" style="left:80.09px;top:218px;color:#989898;font-size:29px;transform:scaleX(0.9568);-webkit-text-stroke:0.7px #989898">Blocked thread</div>
<div class="t" style="left:318.54px;top:218px;color:#c0c0c0;font-size:29px;transform:scaleX(0.9583);-webkit-text-stroke:0.7px #c0c0c0">Camel (camel − 1) thread #22 − Multicast</div>
<div class="t" style="left:873.32px;top:218px;color:#999999;font-size:29px;transform:scaleX(0.9763);-webkit-text-stroke:0.7px #999999">Group: 'main'</div>
<div class="t" style="left:1095.02px;top:218px;color:#999999;font-size:29px;transform:scaleX(0.9895);-webkit-text-stroke:0.7px #999999">Native ID: 608267</div>
<div class="t" style="left:2036.61px;top:218px;color:#c0c0c0;font-size:29px;transform:scaleX(0.9891);-webkit-text-stroke:0.7px #c0c0c0">21</div>
<div class="t" style="left:2117.16px;top:219px;color:#9c9c9c;font-size:27px;transform:scaleX(0.9385);-webkit-text-stroke:0.7px #9c9c9c">0</div>
<div class="t" style="left:2140.30px;top:219px;color:#9c9c9c;font-size:27px;transform:scaleX(0.6667);-webkit-text-stroke:0.7px #9c9c9c">%</div>
<div class="t" style="left:2212.30px;top:218px;color:#c0c0c0;font-size:29px;transform:scaleX(0.9957);-webkit-text-stroke:0.7px #c0c0c0">65</div>
<div class="t" style="left:2293.06px;top:219px;color:#9c9c9c;font-size:27px;transform:scaleX(0.9385);-webkit-text-stroke:0.7px #9c9c9c">2</div>
<div class="t" style="left:2316.20px;top:219px;color:#9c9c9c;font-size:27px;transform:scaleX(0.6667);-webkit-text-stroke:0.7px #9c9c9c">%</div>
<div class="t" style="left:80.09px;top:258px;color:#989898;font-size:29px;transform:scaleX(0.9568);-webkit-text-stroke:0.7px #989898">Blocked thread</div>
<div class="t" style="left:318.54px;top:258px;color:#c0c0c0;font-size:29px;transform:scaleX(0.9583);-webkit-text-stroke:0.7px #c0c0c0">Camel (camel − 1) thread #30 − Multicast</div>
<div class="t" style="left:873.32px;top:258px;color:#999999;font-size:29px;transform:scaleX(0.9763);-webkit-text-stroke:0.7px #999999">Group: 'main'</div>
<div class="t" style="left:1095.02px;top:258px;color:#999999;font-size:29px;transform:scaleX(0.9895);-webkit-text-stroke:0.7px #999999">Native ID: 608275</div>
<div class="t" style="left:2036.61px;top:258px;color:#c0c0c0;font-size:29px;transform:scaleX(0.9891);-webkit-text-stroke:0.7px #c0c0c0">20</div>
<div class="t" style="left:2117.16px;top:259px;color:#9c9c9c;font-size:27px;transform:scaleX(0.9385);-webkit-text-stroke:0.7px #9c9c9c">0</div>
<div class="t" style="left:2140.30px;top:259px;color:#9c9c9c;font-size:27px;transform:scaleX(0.6667);-webkit-text-stroke:0.7px #9c9c9c">%</div>
<div class="t" style="left:2212.30px;top:258px;color:#c0c0c0;font-size:29px;transform:scaleX(0.9957);-webkit-text-stroke:0.7px #c0c0c0">68</div>
<div class="t" style="left:2293.06px;top:259px;color:#9c9c9c;font-size:27px;transform:scaleX(0.9385);-webkit-text-stroke:0.7px #9c9c9c">2</div>
<div class="t" style="left:2316.20px;top:259px;color:#9c9c9c;font-size:27px;transform:scaleX(0.6667);-webkit-text-stroke:0.7px #9c9c9c">%</div>
<div class="t" style="left:80.09px;top:298px;color:#989898;font-size:29px;transform:scaleX(0.9568);-webkit-text-stroke:0.7px #989898">Blocked thread</div>
<div class="t" style="left:318.54px;top:298px;color:#c0c0c0;font-size:29px;transform:scaleX(0.9583);-webkit-text-stroke:0.7px #c0c0c0">Camel (camel − 1) thread #29 − Multicast</div>
<div class="t" style="left:873.32px;top:298px;color:#999999;font-size:29px;transform:scaleX(0.9763);-webkit-text-stroke:0.7px #999999">Group: 'main'</div>
<div class="t" style="left:1095.03px;top:298px;color:#999999;font-size:29px;transform:scaleX(0.9852);-webkit-text-stroke:0.7px #999999">Native ID: 608274</div>
<div class="t" style="left:2035.55px;top:298px;color:#c0c0c0;font-size:29px;transform:scaleX(1.0231);-webkit-text-stroke:0.7px #c0c0c0">19</div>
<div class="t" style="left:2117.16px;top:299px;color:#9c9c9c;font-size:27px;transform:scaleX(0.9385);-webkit-text-stroke:0.7px #9c9c9c">0</div>
<div class="t" style="left:2140.30px;top:299px;color:#9c9c9c;font-size:27px;transform:scaleX(0.6667);-webkit-text-stroke:0.7px #9c9c9c">%</div>
<div class="t" style="left:2212.30px;top:298px;color:#c0c0c0;font-size:29px;transform:scaleX(0.9957);-webkit-text-stroke:0.7px #c0c0c0">78</div>
<div class="t" style="left:2293.06px;top:299px;color:#9c9c9c;font-size:27px;transform:scaleX(0.9385);-webkit-text-stroke:0.7px #9c9c9c">3</div>
<div class="t" style="left:2316.20px;top:299px;color:#9c9c9c;font-size:27px;transform:scaleX(0.6667);-webkit-text-stroke:0.7px #9c9c9c">%</div>
<div class="r" style="left:2330.2px;top:300px;width:2.0px;height:36px;overflow:hidden"><div class="t" style="left:-14.00px;top:-1px;color:#dedede;font-size:27px;transform:scaleX(0.6667);-webkit-text-stroke:0.7px #dedede">%</div></div>
<div class="t" style="left:80.09px;top:338px;color:#989898;font-size:29px;transform:scaleX(0.9568);-webkit-text-stroke:0.7px #989898">Blocked thread</div>
<div class="t" style="left:318.54px;top:338px;color:#c0c0c0;font-size:29px;transform:scaleX(0.9583);-webkit-text-stroke:0.7px #c0c0c0">Camel (camel − 1) thread #24 − Multicast</div>
<div class="t" style="left:873.32px;top:338px;color:#999999;font-size:29px;transform:scaleX(0.9763);-webkit-text-stroke:0.7px #999999">Group: 'main'</div>
<div class="t" style="left:1095.02px;top:338px;color:#999999;font-size:29px;transform:scaleX(0.9895);-webkit-text-stroke:0.7px #999999">Native ID: 608269</div>
<div class="t" style="left:2035.55px;top:338px;color:#c0c0c0;font-size:29px;transform:scaleX(1.0231);-webkit-text-stroke:0.7px #c0c0c0">17</div>
<div class="t" style="left:2117.16px;top:339px;color:#9c9c9c;font-size:27px;transform:scaleX(0.9385);-webkit-text-stroke:0.7px #9c9c9c">0</div>
<div class="t" style="left:2140.30px;top:339px;color:#9c9c9c;font-size:27px;transform:scaleX(0.6667);-webkit-text-stroke:0.7px #9c9c9c">%</div>
<div class="t" style="left:2212.34px;top:338px;color:#c0c0c0;font-size:29px;transform:scaleX(0.9637);-webkit-text-stroke:0.7px #c0c0c0">74</div>
<div class="t" style="left:2293.06px;top:339px;color:#9c9c9c;font-size:27px;transform:scaleX(0.9385);-webkit-text-stroke:0.7px #9c9c9c">3</div>
<div class="t" style="left:2316.20px;top:339px;color:#9c9c9c;font-size:27px;transform:scaleX(0.6667);-webkit-text-stroke:0.7px #9c9c9c">%</div>
<div class="r" style="left:2330.2px;top:340px;width:2.0px;height:36px;overflow:hidden"><div class="t" style="left:-14.00px;top:-1px;color:#dedede;font-size:27px;transform:scaleX(0.6667);-webkit-text-stroke:0.7px #dedede">%</div></div>
<div class="t" style="left:80.09px;top:378px;color:#989898;font-size:29px;transform:scaleX(0.9568);-webkit-text-stroke:0.7px #989898">Blocked thread</div>
<div class="t" style="left:318.54px;top:378px;color:#c0c0c0;font-size:29px;transform:scaleX(0.9583);-webkit-text-stroke:0.7px #c0c0c0">Camel (camel − 1) thread #23 − Multicast</div>
<div class="t" style="left:873.32px;top:378px;color:#999999;font-size:29px;transform:scaleX(0.9763);-webkit-text-stroke:0.7px #999999">Group: 'main'</div>
<div class="t" style="left:1095.02px;top:378px;color:#999999;font-size:29px;transform:scaleX(0.9895);-webkit-text-stroke:0.7px #999999">Native ID: 608268</div>
<div class="t" style="left:2035.55px;top:378px;color:#c0c0c0;font-size:29px;transform:scaleX(1.0231);-webkit-text-stroke:0.7px #c0c0c0">17</div>
<div class="t" style="left:2117.16px;top:379px;color:#9c9c9c;font-size:27px;transform:scaleX(0.9385);-webkit-text-stroke:0.7px #9c9c9c">0</div>
<div class="t" style="left:2140.30px;top:379px;color:#9c9c9c;font-size:27px;transform:scaleX(0.6667);-webkit-text-stroke:0.7px #9c9c9c">%</div>
<div class="t" style="left:2212.30px;top:378px;color:#c0c0c0;font-size:29px;transform:scaleX(0.9957);-webkit-text-stroke:0.7px #c0c0c0">67</div>
<div class="t" style="left:2293.06px;top:379px;color:#9c9c9c;font-size:27px;transform:scaleX(0.9385);-webkit-text-stroke:0.7px #9c9c9c">2</div>
<div class="t" style="left:2316.20px;top:379px;color:#9c9c9c;font-size:27px;transform:scaleX(0.6667);-webkit-text-stroke:0.7px #9c9c9c">%</div>
<div class="t" style="left:80.09px;top:418px;color:#989898;font-size:29px;transform:scaleX(0.9568);-webkit-text-stroke:0.7px #989898">Blocked thread</div>
<div class="t" style="left:318.54px;top:418px;color:#c0c0c0;font-size:29px;transform:scaleX(0.9583);-webkit-text-stroke:0.7px #c0c0c0">Camel (camel − 1) thread #25 − Multicast</div>
<div class="t" style="left:873.32px;top:418px;color:#999999;font-size:29px;transform:scaleX(0.9763);-webkit-text-stroke:0.7px #999999">Group: 'main'</div>
<div class="t" style="left:1095.02px;top:418px;color:#999999;font-size:29px;transform:scaleX(0.9895);-webkit-text-stroke:0.7px #999999">Native ID: 608270</div>
<div class="t" style="left:2035.55px;top:418px;color:#c0c0c0;font-size:29px;transform:scaleX(1.0231);-webkit-text-stroke:0.7px #c0c0c0">17</div>
<div class="t" style="left:2117.16px;top:419px;color:#9c9c9c;font-size:27px;transform:scaleX(0.9385);-webkit-text-stroke:0.7px #9c9c9c">0</div>
<div class="t" style="left:2140.30px;top:419px;color:#9c9c9c;font-size:27px;transform:scaleX(0.6667);-webkit-text-stroke:0.7px #9c9c9c">%</div>
<div class="t" style="left:2212.30px;top:418px;color:#c0c0c0;font-size:29px;transform:scaleX(0.9957);-webkit-text-stroke:0.7px #c0c0c0">66</div>
<div class="t" style="left:2293.06px;top:419px;color:#9c9c9c;font-size:27px;transform:scaleX(0.9385);-webkit-text-stroke:0.7px #9c9c9c">2</div>
<div class="t" style="left:2316.20px;top:419px;color:#9c9c9c;font-size:27px;transform:scaleX(0.6667);-webkit-text-stroke:0.7px #9c9c9c">%</div>
<div class="t" style="left:80.09px;top:458px;color:#989898;font-size:29px;transform:scaleX(0.9568);-webkit-text-stroke:0.7px #989898">Blocked thread</div>
<div class="t" style="left:318.54px;top:458px;color:#c0c0c0;font-size:29px;transform:scaleX(0.9583);-webkit-text-stroke:0.7px #c0c0c0">Camel (camel − 1) thread #27 − Multicast</div>
<div class="t" style="left:873.32px;top:458px;color:#999999;font-size:29px;transform:scaleX(0.9763);-webkit-text-stroke:0.7px #999999">Group: 'main'</div>
<div class="t" style="left:1095.02px;top:458px;color:#999999;font-size:29px;transform:scaleX(0.9895);-webkit-text-stroke:0.7px #999999">Native ID: 608272</div>
<div class="t" style="left:2035.55px;top:458px;color:#c0c0c0;font-size:29px;transform:scaleX(1.0231);-webkit-text-stroke:0.7px #c0c0c0">16</div>
<div class="t" style="left:2117.16px;top:459px;color:#9c9c9c;font-size:27px;transform:scaleX(0.9385);-webkit-text-stroke:0.7px #9c9c9c">0</div>
<div class="t" style="left:2140.30px;top:459px;color:#9c9c9c;font-size:27px;transform:scaleX(0.6667);-webkit-text-stroke:0.7px #9c9c9c">%</div>
<div class="t" style="left:2212.30px;top:458px;color:#c0c0c0;font-size:29px;transform:scaleX(0.9957);-webkit-text-stroke:0.7px #c0c0c0">65</div>
<div class="t" style="left:2293.06px;top:459px;color:#9c9c9c;font-size:27px;transform:scaleX(0.9385);-webkit-text-stroke:0.7px #9c9c9c">2</div>
<div class="t" style="left:2316.20px;top:459px;color:#9c9c9c;font-size:27px;transform:scaleX(0.6667);-webkit-text-stroke:0.7px #9c9c9c">%</div>
<div class="t" style="left:80.09px;top:498px;color:#989898;font-size:29px;transform:scaleX(0.9568);-webkit-text-stroke:0.7px #989898">Blocked thread</div>
<div class="t" style="left:318.54px;top:498px;color:#c0c0c0;font-size:29px;transform:scaleX(0.9583);-webkit-text-stroke:0.7px #c0c0c0">Camel (camel − 1) thread #31 − Multicast</div>
<div class="t" style="left:873.32px;top:498px;color:#999999;font-size:29px;transform:scaleX(0.9763);-webkit-text-stroke:0.7px #999999">Group: 'main'</div>
<div class="t" style="left:1095.02px;top:498px;color:#999999;font-size:29px;transform:scaleX(0.9895);-webkit-text-stroke:0.7px #999999">Native ID: 608276</div>
<div class="t" style="left:2035.55px;top:498px;color:#c0c0c0;font-size:29px;transform:scaleX(1.0231);-webkit-text-stroke:0.7px #c0c0c0">15</div>
<div class="t" style="left:2117.16px;top:499px;color:#9c9c9c;font-size:27px;transform:scaleX(0.9385);-webkit-text-stroke:0.7px #9c9c9c">0</div>
<div class="t" style="left:2140.30px;top:499px;color:#9c9c9c;font-size:27px;transform:scaleX(0.6667);-webkit-text-stroke:0.7px #9c9c9c">%</div>
<div class="t" style="left:2212.30px;top:498px;color:#c0c0c0;font-size:29px;transform:scaleX(0.9957);-webkit-text-stroke:0.7px #c0c0c0">59</div>
<div class="t" style="left:2293.06px;top:499px;color:#9c9c9c;font-size:27px;transform:scaleX(0.9385);-webkit-text-stroke:0.7px #9c9c9c">2</div>
<div class="t" style="left:2316.20px;top:499px;color:#9c9c9c;font-size:27px;transform:scaleX(0.6667);-webkit-text-stroke:0.7px #9c9c9c">%</div>
<div class="t" style="left:80.09px;top:538px;color:#989898;font-size:29px;transform:scaleX(0.9568);-webkit-text-stroke:0.7px #989898">Blocked thread</div>
<div class="t" style="left:318.54px;top:538px;color:#c0c0c0;font-size:29px;transform:scaleX(0.9607);-webkit-text-stroke:0.7px #c0c0c0">Camel (camel − 1) thread #13 − seda://dataQueue</div>
<div class="t" style="left:985.82px;top:538px;color:#999999;font-size:29px;transform:scaleX(0.9763);-webkit-text-stroke:0.7px #999999">Group: 'main'</div>
<div class="t" style="left:1206.72px;top:538px;color:#999999;font-size:29px;transform:scaleX(0.9895);-webkit-text-stroke:0.7px #999999">Native ID: 607977</div>
<div class="t" style="left:2035.55px;top:538px;color:#c0c0c0;font-size:29px;transform:scaleX(1.0231);-webkit-text-stroke:0.7px #c0c0c0">15</div>
<div class="t" style="left:2117.16px;top:539px;color:#9c9c9c;font-size:27px;transform:scaleX(0.9385);-webkit-text-stroke:0.7px #9c9c9c">0</div>
<div class="t" style="left:2140.30px;top:539px;color:#9c9c9c;font-size:27px;transform:scaleX(0.6667);-webkit-text-stroke:0.7px #9c9c9c">%</div>
<div class="t" style="left:2212.30px;top:538px;color:#c0c0c0;font-size:29px;transform:scaleX(0.9957);-webkit-text-stroke:0.7px #c0c0c0">71</div>
<div class="t" style="left:2293.06px;top:539px;color:#9c9c9c;font-size:27px;transform:scaleX(0.9385);-webkit-text-stroke:0.7px #9c9c9c">3</div>
<div class="t" style="left:2316.20px;top:539px;color:#9c9c9c;font-size:27px;transform:scaleX(0.6667);-webkit-text-stroke:0.7px #9c9c9c">%</div>
<div class="r" style="left:2330.2px;top:540px;width:2.0px;height:36px;overflow:hidden"><div class="t" style="left:-14.00px;top:-1px;color:#dedede;font-size:27px;transform:scaleX(0.6667);-webkit-text-stroke:0.7px #dedede">%</div></div>
<div class="t" style="left:80.09px;top:578px;color:#989898;font-size:29px;transform:scaleX(0.9568);-webkit-text-stroke:0.7px #989898">Blocked thread</div>
<div class="t" style="left:318.54px;top:578px;color:#c0c0c0;font-size:29px;transform:scaleX(0.9583);-webkit-text-stroke:0.7px #c0c0c0">Camel (camel − 1) thread #28 − Multicast</div>
<div class="t" style="left:873.32px;top:578px;color:#999999;font-size:29px;transform:scaleX(0.9763);-webkit-text-stroke:0.7px #999999">Group: 'main'</div>
<div class="t" style="left:1095.02px;top:578px;color:#999999;font-size:29px;transform:scaleX(0.9895);-webkit-text-stroke:0.7px #999999">Native ID: 608273</div>
<div class="t" style="left:2035.55px;top:578px;color:#c0c0c0;font-size:29px;transform:scaleX(1.0231);-webkit-text-stroke:0.7px #c0c0c0">15</div>
<div class="t" style="left:2117.16px;top:579px;color:#9c9c9c;font-size:27px;transform:scaleX(0.9385);-webkit-text-stroke:0.7px #9c9c9c">0</div>
<div class="t" style="left:2140.30px;top:579px;color:#9c9c9c;font-size:27px;transform:scaleX(0.6667);-webkit-text-stroke:0.7px #9c9c9c">%</div>
<div class="t" style="left:2212.30px;top:578px;color:#c0c0c0;font-size:29px;transform:scaleX(0.9957);-webkit-text-stroke:0.7px #c0c0c0">65</div>
<div class="t" style="left:2293.06px;top:579px;color:#9c9c9c;font-size:27px;transform:scaleX(0.9385);-webkit-text-stroke:0.7px #9c9c9c">2</div>
<div class="t" style="left:2316.20px;top:579px;color:#9c9c9c;font-size:27px;transform:scaleX(0.6667);-webkit-text-stroke:0.7px #9c9c9c">%</div>
<div class="t" style="left:913.76px;top:646px;color:#c0c0c0;font-size:29px;transform:scaleX(0.9216);-webkit-text-stroke:0.7px #c0c0c0">Reverse Call Tree</div>
<div class="t" style="left:2055.90px;top:646px;color:#c0c0c0;font-size:29px;transform:scaleX(0.9676);-webkit-text-stroke:0.7px #c0c0c0">Time (ms)</div>
<div class="t" style="left:2273.53px;top:646px;color:#c0c0c0;font-size:29px;transform:scaleX(0.9747);-webkit-text-stroke:0.7px #c0c0c0">Count</div>
<div class="t" style="left:122.02px;top:692px;color:#ffffff;font-size:29px;transform:scaleX(0.9815);-webkit-text-stroke:0.7px #ffffff">org.apache.logging.log4j.core.appender.</div>
<div class="t" style="left:630.02px;top:692px;color:#ffffff;font-size:29px;transform:scaleX(0.9838);font-weight:bold;-webkit-text-stroke:0.2px #ffffff">OutputStreamManager.writeBytes</div>
<div class="t" style="left:1088.38px;top:692px;color:#ffffff;font-size:29px;transform:scaleX(0.9239);-webkit-text-stroke:0.7px #ffffff">(ByteBuffer)</div>
<div class="t" style="left:1239.74px;top:692px;color:#999999;font-size:29px;transform:scaleX(0.9607);-webkit-text-stroke:0.7px #999999">OutputStreamManager.java:350</div>
<div class="t" style="left:2061.44px;top:692px;color:#ffffff;font-size:29px;transform:scaleX(0.9825);-webkit-text-stroke:0.7px #ffffff">14</div>
<div class="t" style="left:2254.46px;top:692px;color:#ffffff;font-size:29px;transform:scaleX(1.0357);-webkit-text-stroke:0.7px #ffffff">8</div>
<div class="t" style="left:2126.86px;top:693px;color:#9c9c9c;font-size:27px;transform:scaleX(0.9385);-webkit-text-stroke:0.7px #9c9c9c">5</div>
<div class="t" style="left:2143.80px;top:693px;color:#9c9c9c;font-size:27px;transform:scaleX(0.8133);-webkit-text-stroke:0.7px #9c9c9c">4</div>
<div class="t" style="left:2166.00px;top:693px;color:#9c9c9c;font-size:27px;transform:scaleX(0.6667);-webkit-text-stroke:0.7px #9c9c9c">%</div>
<div class="r" style="left:2138px;top:694px;width:44px;height:36px;overflow:hidden"><div class="t" style="left:-11.14px;top:-1px;color:#dedede;font-size:27px;transform:scaleX(0.9385);-webkit-text-stroke:0.7px #dedede">5</div></div>
<div class="r" style="left:2138px;top:694px;width:44px;height:36px;overflow:hidden"><div class="t" style="left:5.80px;top:-1px;color:#dedede;font-size:27px;transform:scaleX(0.8133);-webkit-text-stroke:0.7px #dedede">4</div></div>
<div class="r" style="left:2138px;top:694px;width:44px;height:36px;overflow:hidden"><div class="t" style="left:28.00px;top:-1px;color:#dedede;font-size:27px;transform:scaleX(0.6667);-webkit-text-stroke:0.7px #dedede">%</div></div>
<div class="t" style="left:2301.77px;top:693px;color:#9c9c9c;font-size:27px;transform:scaleX(1.0167);-webkit-text-stroke:0.7px #9c9c9c">1</div>
<div class="t" style="left:2318.86px;top:693px;color:#9c9c9c;font-size:27px;transform:scaleX(0.9385);-webkit-text-stroke:0.7px #9c9c9c">2</div>
<div class="t" style="left:2342.00px;top:693px;color:#9c9c9c;font-size:27px;transform:scaleX(0.6667);-webkit-text-stroke:0.7px #9c9c9c">%</div>
<div class="r" style="left:2348px;top:694px;width:10px;height:36px;overflow:hidden"><div class="t" style="left:-6.00px;top:-1px;color:#dedede;font-size:27px;transform:scaleX(0.6667);-webkit-text-stroke:0.7px #dedede">%</div></div>
<div class="t" style="left:122.02px;top:732px;color:#c0c0c0;font-size:29px;transform:scaleX(0.9815);-webkit-text-stroke:0.7px #c0c0c0">org.apache.logging.log4j.core.appender.</div>
<div class="t" style="left:630.02px;top:732px;color:#c0c0c0;font-size:29px;transform:scaleX(0.9838);font-weight:bold;-webkit-text-stroke:0.2px #c0c0c0">OutputStreamManager.writeBytes</div>
<div class="t" style="left:1088.38px;top:732px;color:#c0c0c0;font-size:29px;transform:scaleX(0.9239);-webkit-text-stroke:0.7px #c0c0c0">(ByteBuffer)</div>
<div class="t" style="left:1239.74px;top:732px;color:#999999;font-size:29px;transform:scaleX(0.9607);-webkit-text-stroke:0.7px #999999">OutputStreamManager.java:349</div>
<div class="t" style="left:2061.37px;top:732px;color:#c0c0c0;font-size:29px;transform:scaleX(1.0162);-webkit-text-stroke:0.7px #c0c0c0">10</div>
<div class="t" style="left:2239.00px;top:732px;color:#c0c0c0;font-size:29px;transform:scaleX(0.9957);-webkit-text-stroke:0.7px #c0c0c0">50</div>
<div class="t" style="left:2126.86px;top:733px;color:#9c9c9c;font-size:27px;transform:scaleX(0.9385);-webkit-text-stroke:0.7px #9c9c9c">3</div>
<div class="t" style="left:2142.86px;top:733px;color:#9c9c9c;font-size:27px;transform:scaleX(0.9385);-webkit-text-stroke:0.7px #9c9c9c">8</div>
<div class="t" style="left:2166.00px;top:733px;color:#9c9c9c;font-size:27px;transform:scaleX(0.6667);-webkit-text-stroke:0.7px #9c9c9c">%</div>
<div class="r" style="left:2152px;top:734px;width:30px;height:36px;overflow:hidden"><div class="t" style="left:-9.14px;top:-1px;color:#dedede;font-size:27px;transform:scaleX(0.9385);-webkit-text-stroke:0.7px #dedede">8</div></div>
<div class="r" style="left:2152px;top:734px;width:30px;height:36px;overflow:hidden"><div class="t" style="left:14.00px;top:-1px;color:#dedede;font-size:27px;transform:scaleX(0.6667);-webkit-text-stroke:0.7px #dedede">%</div></div>
<div class="t" style="left:2302.86px;top:733px;color:#9c9c9c;font-size:27px;transform:scaleX(0.9385);-webkit-text-stroke:0.7px #9c9c9c">7</div>
<div class="t" style="left:2318.86px;top:733px;color:#9c9c9c;font-size:27px;transform:scaleX(0.9385);-webkit-text-stroke:0.7px #9c9c9c">6</div>
<div class="t" style="left:2342.00px;top:733px;color:#9c9c9c;font-size:27px;transform:scaleX(0.6667);-webkit-text-stroke:0.7px #9c9c9c">%</div>
<div class="r" style="left:2298px;top:734px;width:60px;height:36px;overflow:hidden"><div class="t" style="left:4.86px;top:-1px;color:#dedede;font-size:27px;transform:scaleX(0.9385);-webkit-text-stroke:0.7px #dedede">7</div></div>
<div class="r" style="left:2298px;top:734px;width:60px;height:36px;overflow:hidden"><div class="t" style="left:20.86px;top:-1px;color:#dedede;font-size:27px;transform:scaleX(0.9385);-webkit-text-stroke:0.7px #dedede">6</div></div>
<div class="r" style="left:2298px;top:734px;width:60px;height:36px;overflow:hidden"><div class="t" style="left:44.00px;top:-1px;color:#dedede;font-size:27px;transform:scaleX(0.6667);-webkit-text-stroke:0.7px #dedede">%</div></div>
<div class="t" style="left:122.02px;top:772px;color:#c0c0c0;font-size:29px;transform:scaleX(0.9815);-webkit-text-stroke:0.7px #c0c0c0">org.apache.logging.log4j.core.appender.</div>
<div class="t" style="left:630.01px;top:772px;color:#c0c0c0;font-size:29px;transform:scaleX(0.9904);font-weight:bold;-webkit-text-stroke:0.2px #c0c0c0">OutputStreamManager.flush</div>
<div class="t" style="left:1016.05px;top:772px;color:#c0c0c0;font-size:29px;transform:scaleX(0.8465);-webkit-text-stroke:0.7px #c0c0c0">()</div>
<div class="t" style="left:1041.84px;top:772px;color:#999999;font-size:29px;transform:scaleX(0.9573);-webkit-text-stroke:0.7px #999999">OutputStreamManager.java:291</div>
<div class="t" style="left:2078.00px;top:772px;color:#c0c0c0;font-size:29px;transform:scaleX(1.0000);-webkit-text-stroke:0.7px #c0c0c0">1</div>
<div class="t" style="left:2254.46px;top:772px;color:#c0c0c0;font-size:29px;transform:scaleX(1.0357);-webkit-text-stroke:0.7px #c0c0c0">8</div>
<div class="t" style="left:2143.80px;top:773px;color:#9c9c9c;font-size:27px;transform:scaleX(0.8133);-webkit-text-stroke:0.7px #9c9c9c">4</div>
<div class="t" style="left:2166.00px;top:773px;color:#9c9c9c;font-size:27px;transform:scaleX(0.6667);-webkit-text-stroke:0.7px #9c9c9c">%</div>
<div class="r" style="left:2178px;top:774px;width:4px;height:36px;overflow:hidden"><div class="t" style="left:-12.00px;top:-1px;color:#dedede;font-size:27px;transform:scaleX(0.6667);-webkit-text-stroke:0.7px #dedede">%</div></div>
<div class="t" style="left:2301.77px;top:773px;color:#9c9c9c;font-size:27px;transform:scaleX(1.0167);-webkit-text-stroke:0.7px #9c9c9c">1</div>
<div class="t" style="left:2318.86px;top:773px;color:#9c9c9c;font-size:27px;transform:scaleX(0.9385);-webkit-text-stroke:0.7px #9c9c9c">2</div>
<div class="t" style="left:2342.00px;top:773px;color:#9c9c9c;font-size:27px;transform:scaleX(0.6667);-webkit-text-stroke:0.7px #9c9c9c">%</div>
<div class="r" style="left:2348px;top:774px;width:10px;height:36px;overflow:hidden"><div class="t" style="left:-6.00px;top:-1px;color:#dedede;font-size:27px;transform:scaleX(0.6667);-webkit-text-stroke:0.7px #dedede">%</div></div>
</body></html>
